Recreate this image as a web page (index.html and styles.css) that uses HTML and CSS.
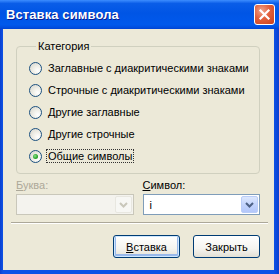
FILE: index.html
```html
<!DOCTYPE html>
<html lang="ru">
<head>
<meta charset="utf-8">
<title>Вставка символа</title>
<link rel="stylesheet" href="styles.css">
</head>
<body>
<div class="window">
  <div class="titlebar">
    <span class="title">Вставка символа</span>
    <span class="close" aria-label="Закрыть">
      <svg width="13" height="13" viewBox="0 0 13 13"><path d="M2.5 2.5 L10.5 10.5 M10.5 2.5 L2.5 10.5" stroke="#fff" stroke-width="2.2" stroke-linecap="square" fill="none"/></svg>
    </span>
  </div>
  <div class="content">
    <fieldset class="group">
      <legend class="legend">Категория</legend>
      <div class="radio"><span class="dot"></span><span>Заглавные с диакритическими знаками</span></div>
      <div class="radio"><span class="dot"></span><span>Строчные с диакритическими знаками</span></div>
      <div class="radio"><span class="dot"></span><span>Другие заглавные</span></div>
      <div class="radio"><span class="dot"></span><span>Другие строчные</span></div>
      <div class="radio checked"><span class="dot"></span><span class="focus">Общие символы</span></div>
    </fieldset>
    <div class="fields">
      <div class="field disabled">
        <div class="label"><u>Б</u>уква:</div>
        <div class="combo"><span class="value"></span><span class="arrow"><svg width="9" height="6" viewBox="0 0 9 6"><path d="M1 1 L4.5 4.5 L8 1" stroke="currentColor" stroke-width="2" fill="none"/></svg></span></div>
      </div>
      <div class="field">
        <div class="label"><u>С</u>имвол:</div>
        <div class="combo"><span class="value">i</span><span class="arrow"><svg width="9" height="6" viewBox="0 0 9 6"><path d="M1 1 L4.5 4.5 L8 1" stroke="currentColor" stroke-width="2" fill="none"/></svg></span></div>
      </div>
    </div>
    <div class="sep"></div>
    <div class="buttons">
      <span class="btn default"><u>В</u>ставка</span>
      <span class="btn">Закрыть</span>
    </div>
  </div>
</div>
</body>
</html>
```
FILE: styles.css
```css
html, body {
  margin: 0;
  padding: 0;
  background: #0a4fe0;
}
.window {
  width: 279px;
  height: 274px;
  box-sizing: border-box;
  display: flex;
  flex-direction: column;
  background: linear-gradient(90deg, #0a3fcf 0, #0d52e6 3px, #0d52e6 274px, #0a3fcf 279px);
  font-family: "Liberation Sans", Arial, sans-serif;
  font-size: 11px;
  color: #000;
}
.titlebar {
  height: 29px;
  flex: none;
  display: flex;
  align-items: center;
  justify-content: space-between;
  padding: 0 4px 0 6px;
  background: linear-gradient(180deg, #3d8dff 0%, #0a5de8 12%, #0055e5 45%, #0059ec 85%, #004fe0 94%, #0043d2 100%);
}
.title {
  color: #fff;
  font-weight: bold;
  font-size: 13px;
  font-family: "Liberation Sans", Arial, sans-serif;
  text-shadow: 1px 1px 0 #0a1d8f;
  letter-spacing: 0.1px;
}
.close {
  width: 21px;
  height: 21px;
  box-sizing: border-box;
  border: 1px solid #fff;
  border-radius: 3px;
  background: radial-gradient(circle at 35% 30%, #f0a48c 0%, #e2603c 45%, #c8401c 100%);
  display: flex;
  align-items: center;
  justify-content: center;
}
.content {
  flex: 1;
  margin: 0 5px 4px 3px;
  background: #ece9d8;
  padding: 11px 14px 0 13px;
  display: flex;
  flex-direction: column;
}
.group {
  margin: 0;
  padding: 4px 0 6px 12px;
  border: 1px solid #d0d0bf;
  border-radius: 4px;
  min-width: 0;
}
.legend {
  padding: 0 2px;
  margin-left: 7px;
  line-height: 13px;
  color: #000;
}
.radio {
  height: 22px;
  display: flex;
  align-items: center;
  gap: 6px;
}
.dot {
  width: 13px;
  height: 13px;
  box-sizing: border-box;
  border-radius: 50%;
  border: 1px solid #1c5180;
  background: radial-gradient(circle at 70% 70%, #ffffff 0%, #f0efe8 40%, #d4d3cb 100%);
  flex: none;
  position: relative;
}
.checked .dot::after {
  content: "";
  position: absolute;
  left: 3px;
  top: 3px;
  width: 5px;
  height: 5px;
  border-radius: 50%;
  background: radial-gradient(circle at 40% 40%, #8be18b 0%, #2fa82f 55%, #188a18 100%);
}
.focus {
  outline: 1px dotted #333;
  outline-offset: 0;
  padding: 0 1px;
  margin-left: -1px;
}
.fields {
  display: grid;
  grid-template-columns: 1fr 1fr;
  column-gap: 9px;
  margin-top: 5px;
}
.label {
  line-height: 13px;
  height: 13px;
  margin-bottom: 2px;
}
.disabled .label {
  color: #aca899;
}
.combo {
  height: 21px;
  box-sizing: border-box;
  border: 1px solid #7f9db9;
  background: #fff;
  display: flex;
  align-items: center;
  padding: 1px;
}
.combo .value {
  flex: 1;
  padding-left: 5px;
}
.arrow {
  width: 17px;
  height: 17px;
  box-sizing: border-box;
  border: 1px solid #bacdf8;
  border-radius: 2px;
  background: linear-gradient(180deg, #dde7fd 0%, #c3d4fc 50%, #b3c7fa 100%);
  color: #4d6185;
  display: flex;
  align-items: center;
  justify-content: center;
}
.disabled .combo {
  border-color: #c9c7ba;
  background: #f4f3ee;
}
.disabled .arrow {
  border-color: #e8e7e0;
  background: #f7f7f4;
  color: #c9c7ba;
}
.sep {
  height: 1px;
  border-bottom: 1px solid #fff;
  background: #aca899;
  margin: 7px -8px 0 -5px;
}
.buttons {
  display: flex;
  justify-content: flex-end;
  gap: 13px;
  margin-top: 11px;
}
.btn {
  width: 67px;
  height: 23px;
  box-sizing: border-box;
  border: 1px solid #003c74;
  border-radius: 3px;
  background: linear-gradient(180deg, #ffffff 0%, #f5f4ef 60%, #e3e0d5 100%);
  display: flex;
  align-items: center;
  justify-content: center;
}
.btn.default {
  box-shadow: inset 0 0 0 1px #cee7ff, inset 0 -1px 0 2px #98b8ea;
}
u {
  text-decoration: underline;
  text-underline-offset: 1px;
}
```
